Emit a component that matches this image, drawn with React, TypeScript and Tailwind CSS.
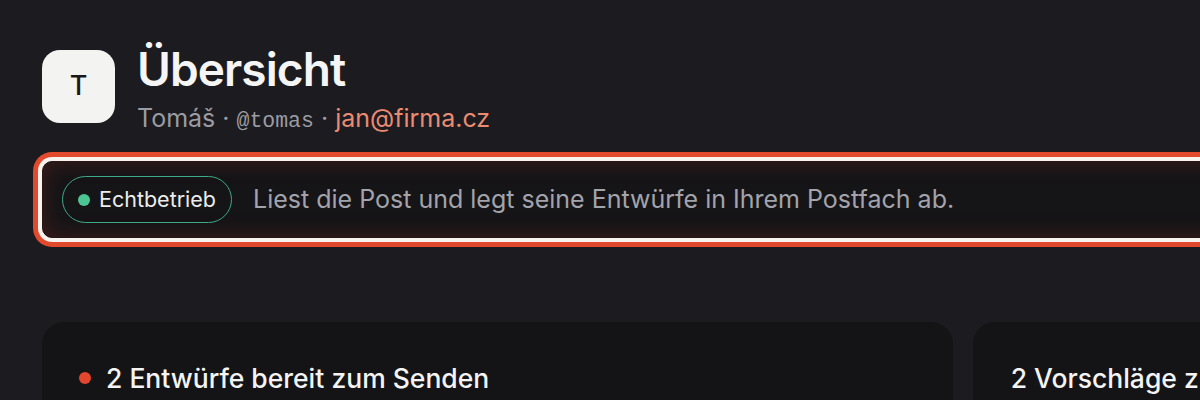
export default function App() {
  return (
    <div
      className="w-[1200px] h-[400px] overflow-hidden bg-[#1c1b1f] text-white"
      style={{ fontFamily: "Inter, 'Noto Sans', sans-serif" }}
    >
      <div className="w-[1428px] pl-[42px] pt-[50px]">
        {/* header */}
        <div className="flex items-start gap-[22px]">
          <div className="flex h-[73px] w-[73px] shrink-0 items-center justify-center rounded-[18px] bg-[#f3f3f1] text-[27px] font-medium text-[#18181b]">
            T
          </div>
          <div className="-mt-[5px] flex flex-col">
            <h1 className="text-[46px] font-semibold leading-[48px] tracking-[-0.02em] text-[#f5f5f5]">Übersicht</h1>
            <div className="mt-[10px] flex h-[30px] items-baseline gap-[7px] text-[25px] leading-[30px] text-[#9b9ba3]">
              <span>Tomáš</span>
              <span>·</span>
              <span className="text-[21.5px] leading-[24px]" style={{ fontFamily: "'Liberation Mono', monospace" }}>
                @tomas
              </span>
              <span>·</span>
              <span className="text-[#ea8b72]">jan@firma.cz</span>
            </div>
          </div>
        </div>

        {/* mode banner */}
        <div className="mt-[28px] flex h-[77px] items-center gap-[21px] rounded-[10px] border border-[#2a1512] bg-[#151417] pl-[19px] shadow-[inset_0_0_22px_rgba(214,64,40,0.22),0_0_0_4px_#f7f3ef,0_0_0_9px_#e24a2e]">
          <div className="flex h-[47px] items-center gap-[9px] rounded-full border-[1.5px] border-[#3da985] pl-[15px] pr-[15px]">
            <span className="h-[12px] w-[12px] rounded-full bg-[#4cc594]" />
            <span className="text-[21.5px] text-[#ececec]">Echtbetrieb</span>
          </div>
          <p className="text-[25px] text-[#a3a3ab]">Liest die Post und legt seine Entwürfe in Ihrem Postfach ab.</p>
        </div>

        {/* cards */}
        <div className="mt-[84px] grid grid-cols-[2fr_1fr] gap-[20px]">
          <div className="h-[200px] rounded-[22px] bg-[#141416] px-[37px] pt-[40px]">
            <div className="flex items-center gap-[15px] leading-[32px]">
              <span className="h-[12px] w-[12px] rounded-full bg-[#e2462c]" />
              <span className="text-[26.5px] font-medium text-[#f4f4f4]">2 Entwürfe bereit zum Senden</span>
            </div>
          </div>
          <div className="h-[200px] rounded-[22px] bg-[#141416] px-[38px] pt-[40px] leading-[32px]">
            <span className="text-[26.5px] font-medium text-[#f4f4f4]">2 Vorschläge zum Prüfen</span>
          </div>
        </div>
      </div>
    </div>
  )
}
